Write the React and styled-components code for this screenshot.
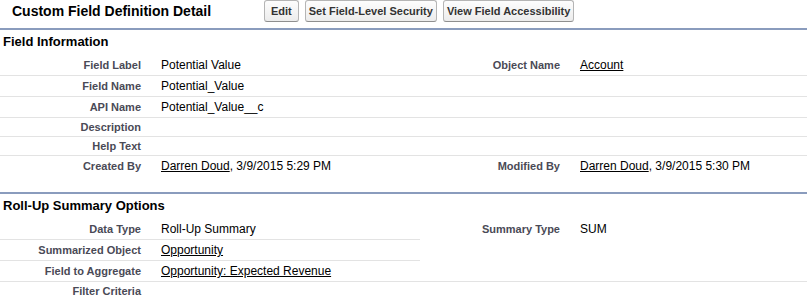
import React from "react";
import styled, { createGlobalStyle } from "styled-components";

const Global = createGlobalStyle`
  html, body { margin: 0; padding: 0; background: #fff; }
  body { font-family: "Liberation Sans", Arial, sans-serif; color: #000; overflow: hidden; }
`;

const Page = styled.div`
  width: 807px;
  overflow: hidden;
`;

const Header = styled.div`
  display: flex;
  align-items: center;
  height: 28px;
`;

const Title = styled.h2`
  margin: 0;
  box-sizing: border-box;
  width: 264px;
  padding-left: 12px;
  font-size: 14px;
  line-height: 17px;
  font-weight: bold;
  color: #000;
  margin-top: -5px;
`;

const Buttons = styled.div`
  display: flex;
  gap: 6px;
  margin-top: -6px;
`;

const Button = styled.button`
  height: 22px;
  box-sizing: border-box;
  padding: 0 ${(p) => p.$pad || 3}px;
  font-family: "Liberation Sans", Arial, sans-serif;
  font-size: 11px;
  font-weight: bold;
  color: #333;
  border: 1px solid #b5b5b5;
  border-bottom-color: #8f8f8f;
  border-radius: 3px;
  background: linear-gradient(#fdfdfd, #ececec);
`;

const Section = styled.section`
  border-top: 2px solid #8a9cbd;
  padding-bottom: ${(p) => p.$bottom || 0}px;
`;

const SectionTitle = styled.h3`
  margin: 0;
  padding: 4px 3px 6px;
  font-size: 13px;
  line-height: 15px;
  font-weight: bold;
  color: #000;
`;

const Row = styled.div`
  display: grid;
  grid-template-columns: 151px 269px 150px 1fr;
`;

const Cell = styled.div`
  display: flex;
  align-items: center;
  box-sizing: border-box;
  padding: 3px 0;
  border-bottom: 1px solid ${(p) => (p.$line ? "#e3e3e3" : "transparent")};
`;

const Label = styled(Cell)`
  justify-content: flex-end;
  padding-right: 10px;
  font-size: 11px;
  line-height: 12px;
  font-weight: bold;
  color: #4a4a56;
`;

const Data = styled(Cell)`
  padding-left: 10px;
  font-size: 12px;
  line-height: 14px;
  color: #000;
`;

const Link = styled.a`
  color: #000;
  text-decoration: underline;
`;

function FieldRow({ label, value, rLabel, rValue, left = true, right = true }) {
  return (
    <Row>
      <Label $line={left}>{label}</Label>
      <Data $line={left}>{value}</Data>
      <Label $line={right}>{rLabel}</Label>
      <Data $line={right}>{rValue}</Data>
    </Row>
  );
}

export default function App() {
  return (
    <Page>
      <Global />
      <Header>
        <Title>Custom Field Definition Detail</Title>
        <Buttons>
          <Button $pad={6}>Edit</Button>
          <Button>Set Field-Level Security</Button>
          <Button>View Field Accessibility</Button>
        </Buttons>
      </Header>

      <Section $bottom={15}>
        <SectionTitle>Field Information</SectionTitle>
        <FieldRow
          label="Field Label"
          value="Potential Value"
          rLabel="Object Name"
          rValue={<Link>Account</Link>}
        />
        <FieldRow label="Field Name" value="Potential_Value" />
        <FieldRow label="API Name" value="Potential_Value__c" />
        <FieldRow label="Description" />
        <FieldRow label="Help Text" />
        <FieldRow
          label="Created By"
          value={<span><Link>Darren Doud</Link>, 3/9/2015 5:29 PM</span>}
          rLabel="Modified By"
          rValue={<span><Link>Darren Doud</Link>, 3/9/2015 5:30 PM</span>}
          left={false}
          right={false}
        />
      </Section>

      <Section>
        <SectionTitle>Roll-Up Summary Options</SectionTitle>
        <FieldRow
          label="Data Type"
          value="Roll-Up Summary"
          rLabel="Summary Type"
          rValue="SUM"
          right={false}
        />
        <FieldRow label="Summarized Object" value={<Link>Opportunity</Link>} right={false} />
        <FieldRow label="Field to Aggregate" value={<Link>Opportunity: Expected Revenue</Link>} />
        <FieldRow label="Filter Criteria" left={false} right={false} />
      </Section>
    </Page>
  );
}
